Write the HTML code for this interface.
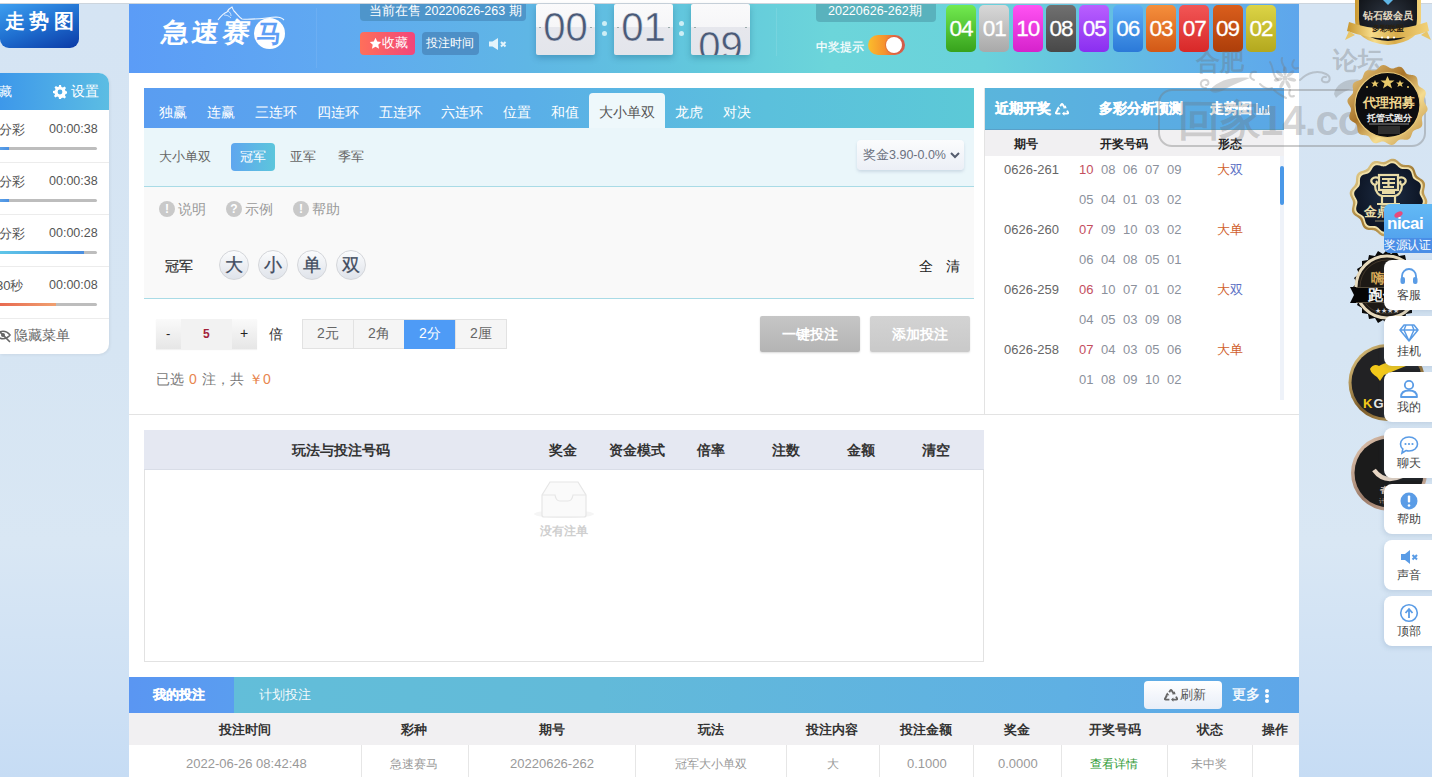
<!DOCTYPE html>
<html><head><meta charset="utf-8">
<style>
*{margin:0;padding:0;box-sizing:border-box}
html,body{width:1432px;height:777px;overflow:hidden}
body{background:linear-gradient(180deg,#d5e4f3 0%,#d6e5f3 45%,#d9e7f4 70%,#cde0f4 90%,#c6dcf4 100%);font-family:"Liberation Sans",sans-serif;position:relative;color:#333}
.a{position:absolute}
.topstrip{left:0;top:0;width:1432px;height:4px;background:linear-gradient(180deg,#fff 0,#fff 3px,#cdd5dd 3px)}
.main{left:129px;top:4px;width:1170px;height:773px;background:#fff}
.hdr{left:129px;top:4px;width:1170px;height:69px;background:linear-gradient(90deg,#5b9cf7 0%,#60a9f1 17%,#5fb6e5 34%,#62c8dc 49%,#6cd5da 60%,#6ad2db 73%,#65c4e0 81%,#62b4e7 90%,#5ea6ec 100%)}
.t{white-space:nowrap;line-height:1}

.dg{top:4px;width:59px;height:51px;border-radius:2px;overflow:hidden;background:linear-gradient(180deg,#fafafb 0,#f6f6f8 45%,#e6e7ed 46%,#e3e5eb 100%);box-shadow:0 3px 6px rgba(0,60,90,0.25)}
.dg:after{content:"";position:absolute;left:3px;right:3px;top:23px;height:1px;background:rgba(0,0,0,0.0);border-left:2px solid #9aa;border-right:2px solid #9aa}
.dgt{position:absolute;left:0;top:3px;width:59px;text-align:center;font-size:40px;line-height:40px;color:#4a5a78;letter-spacing:0px;-webkit-text-stroke:0.6px rgba(236,237,242,0.85)}
.dot{width:5px;height:5px;border-radius:50%;background:#cdeef5}
.ball{top:5px;width:30px;height:47px;border-radius:5px;color:#fff;font-size:22.5px;line-height:48px;text-align:center;letter-spacing:-1px;-webkit-text-stroke:0.3px #fff}

.bq{top:250px;width:30px;height:30px;border-radius:50%;border:1px solid #d4d6da;background:linear-gradient(180deg,#fbfcfd,#dfe3ea);color:#3f4b5e;font-size:17.5px;line-height:28px;text-align:center;-webkit-text-stroke:0.3px #3f4b5e}
</style></head><body>
<div class="a topstrip"></div>
<div class="a main"></div>
<div class="a hdr"></div>

<!-- header content -->
<div class="a" style="left:316px;top:8px;width:1px;height:60px;background:rgba(255,255,255,0.08)"></div>
<div class="a t" style="left:163px;top:19px;font-size:26px;font-weight:bold;color:#fff;letter-spacing:3px;transform:skewX(-6deg) scaleX(1.05);transform-origin:0 0">急速赛</div>
<div class="a" style="left:254px;top:18px;width:31px;height:31px;border-radius:50%;background:#fff"></div>
<div class="a t" style="left:257px;top:21px;font-size:25px;font-weight:bold;color:#5e9ef5;transform:skewX(-6deg)">马</div>
<svg class="a" style="left:214px;top:6px" width="72" height="20" viewBox="0 0 72 20"><path d="M4 14 C7 10,10 7,13 6 C14 4,16 2,18 1 C19 3,19 4,20 5 C23 8,25 11,28 13 C38 14,50 12,62 11 C65 11,68 12,70 14" stroke="#fff" stroke-width="1.1" fill="none" opacity="0.9"/><path d="M10 9 C13 9,15 10,17 12 M14 5 C16 6,17 8,17 10" stroke="#fff" stroke-width="0.9" fill="none" opacity="0.75"/></svg>
<div class="a" style="left:360px;top:4px;width:166px;height:17px;background:#4c92c6;border-radius:0 0 4px 4px;opacity:.9"></div>
<div class="a t" style="left:369px;top:5px;font-size:12.5px;color:#fff">当前在售 20220626-263 期</div>
<div class="a" style="left:360px;top:32px;width:55px;height:23px;border-radius:4px;background:linear-gradient(90deg,#ff6f5a,#f2457b)"></div>
<svg class="a" style="left:369px;top:37px" width="13" height="13" viewBox="0 0 24 24"><path d="M12 1.5l3.2 6.9 7.3.8-5.4 5 1.5 7.3L12 17.8l-6.6 3.7 1.5-7.3-5.4-5 7.3-.8z" fill="#fff"/></svg><div class="a t" style="left:382px;top:37px;font-size:12.5px;color:#fff">收藏</div>
<div class="a" style="left:422px;top:32px;width:57px;height:23px;border-radius:4px;background:#4d8fc6"></div>
<div class="a t" style="left:426px;top:37px;font-size:12px;color:#fff">投注时间</div>
<svg class="a" style="left:489px;top:38px" width="19" height="12" viewBox="0 0 19 12"><path d="M0 3.5 H3.5 L9 0 V12 L3.5 8.5 H0 Z" fill="#e4f4fb"/><path d="M12 4 L16.5 8.5 M16.5 4 L12 8.5" stroke="#e4f4fb" stroke-width="2"/></svg>

<!-- timer -->
<div class="a" style="left:776px;top:8px;width:1px;height:48px;background:rgba(255,255,255,0.1)"></div>
<div class="a dg" style="left:536px"><div class="dgt">00</div></div>
<div class="a dg" style="left:614px"><div class="dgt">01</div></div>
<div class="a dg" style="left:691px"><div class="dgt" style="top:22px">09</div></div>
<div class="a dot" style="left:602px;top:21px"></div><div class="a dot" style="left:602px;top:31px"></div>
<div class="a dot" style="left:679px;top:21px"></div><div class="a dot" style="left:679px;top:31px"></div>


<div class="a" style="left:816px;top:4px;width:120px;height:18px;background:#58aeb9;border-radius:0 0 4px 4px;opacity:.9"></div>
<div class="a t" style="left:828px;top:5px;font-size:12.5px;color:#fff">20220626-262期</div>
<div class="a t" style="left:816px;top:42px;font-size:11.8px;color:#fff;-webkit-text-stroke:0.2px #fff">中奖提示</div>
<div class="a" style="left:868px;top:35px;width:37px;height:20px;border-radius:10px;background:linear-gradient(90deg,#fbbd2c 0%,#f6922e 45%,#e86a3e 70%,#cf5a4e 100%)"></div>
<div class="a" style="left:886px;top:37px;width:16px;height:16px;border-radius:50%;background:#fff;box-shadow:0 0 0 1px rgba(210,90,70,0.5)"></div>
<div class="a ball" style="left:946.0px;background:linear-gradient(180deg,#72ea50,#37a21c)">04</div>
<div class="a ball" style="left:979.3px;background:linear-gradient(180deg,#d8d8d8,#a9a9a9)">01</div>
<div class="a ball" style="left:1012.7px;background:linear-gradient(180deg,#ff52f2,#d622cc)">10</div>
<div class="a ball" style="left:1046.0px;background:linear-gradient(180deg,#707070,#484848)">08</div>
<div class="a ball" style="left:1079.3px;background:linear-gradient(180deg,#b95fff,#8a2ff0)">05</div>
<div class="a ball" style="left:1112.7px;background:linear-gradient(180deg,#5eaef6,#2b79d8)">06</div>
<div class="a ball" style="left:1146.0px;background:linear-gradient(180deg,#f58f3c,#d25816)">03</div>
<div class="a ball" style="left:1179.3px;background:linear-gradient(180deg,#f25656,#d82828)">07</div>
<div class="a ball" style="left:1212.6px;background:linear-gradient(180deg,#da5e1c,#ad3e0a)">09</div>
<div class="a ball" style="left:1246.0px;background:linear-gradient(180deg,#dcd446,#b3a81e)">02</div>

<!-- left sidebar -->
<div class="a" style="left:0;top:4px;width:79px;height:44px;border-radius:0 0 9px 9px;background:linear-gradient(160deg,#3d9ff0 0%,#1f6fd0 50%,#0b3aa6 100%)"></div>
<div class="a t" style="left:5px;top:12px;font-size:19.5px;font-weight:bold;color:#fff;letter-spacing:4.3px">走势图</div>
<div class="a" style="left:0;top:73px;width:109px;height:281px;background:#fff;border-radius:0 10px 10px 0;box-shadow:1px 1px 3px rgba(0,0,0,0.06)"></div>
<div class="a" style="left:0;top:73px;width:109px;height:37px;border-radius:0 10px 0 0;background:linear-gradient(90deg,#3d98ea,#5cbde3)"></div>
<div class="a t" style="left:-1px;top:85px;font-size:13px;color:#fff">藏</div>
<svg class="a" style="left:53px;top:85px" width="14" height="14" viewBox="0 0 14 14"><path fill="#fff" d="M6 0h2l.4 2a5 5 0 0 1 1.5.6l1.7-1.1 1.4 1.4-1.1 1.7c.3.5.5 1 .6 1.5l2 .4v2l-2 .4a5 5 0 0 1-.6 1.5l1.1 1.7-1.4 1.4-1.7-1.1c-.5.3-1 .5-1.5.6L8 14H6l-.4-2a5 5 0 0 1-1.5-.6l-1.7 1.1-1.4-1.4 1.1-1.7A5 5 0 0 1 1.5 8.4L0 8V6l2-.4c.1-.5.3-1 .6-1.5L1.5 2.4l1.4-1.4 1.7 1.1c.5-.3 1-.5 1.5-.6zM7 4.6a2.4 2.4 0 1 0 0 4.8 2.4 2.4 0 0 0 0-4.8z"/></svg>
<div class="a t" style="left:71px;top:85px;font-size:13.5px;color:#fff">设置</div>
<div class="a t" style="left:-1px;top:123px;font-size:13px;color:#555">分彩</div>
<div class="a t" style="left:49px;top:123px;font-size:12.5px;color:#555">00:00:38</div>
<div class="a" style="left:0;top:147px;width:97px;height:3px;background:#bdbdbd;border-radius:0 2px 2px 0"></div>
<div class="a" style="left:0;top:147px;width:9px;height:3px;background:linear-gradient(90deg,#5aa0e8,#4a8fe0)"></div>
<div class="a" style="left:0;top:162px;width:109px;height:1px;background:#ececec"></div>
<div class="a t" style="left:-1px;top:175px;font-size:13px;color:#555">分彩</div>
<div class="a t" style="left:49px;top:175px;font-size:12.5px;color:#555">00:00:38</div>
<div class="a" style="left:0;top:199px;width:97px;height:3px;background:#bdbdbd;border-radius:0 2px 2px 0"></div>
<div class="a" style="left:0;top:199px;width:9px;height:3px;background:linear-gradient(90deg,#5aa0e8,#4a8fe0)"></div>
<div class="a" style="left:0;top:214px;width:109px;height:1px;background:#ececec"></div>
<div class="a t" style="left:-1px;top:227px;font-size:13px;color:#555">分彩</div>
<div class="a t" style="left:49px;top:227px;font-size:12.5px;color:#555">00:00:28</div>
<div class="a" style="left:0;top:251px;width:97px;height:3px;background:#bdbdbd;border-radius:0 2px 2px 0"></div>
<div class="a" style="left:0;top:251px;width:84px;height:3px;background:linear-gradient(90deg,#5ec6e8,#4a8ee0)"></div>
<div class="a" style="left:0;top:266px;width:109px;height:1px;background:#ececec"></div>
<div class="a t" style="left:-4px;top:279px;font-size:13px;color:#555">30秒</div>
<div class="a t" style="left:49px;top:279px;font-size:12.5px;color:#555">00:00:08</div>
<div class="a" style="left:0;top:303px;width:97px;height:3px;background:#bdbdbd;border-radius:0 2px 2px 0"></div>
<div class="a" style="left:0;top:303px;width:56px;height:3px;background:linear-gradient(90deg,#e86a50,#f0a070)"></div>
<div class="a" style="left:0;top:318px;width:109px;height:1px;background:#ececec"></div>

<svg class="a" style="left:0;top:329px" width="12" height="14" viewBox="0 0 12 14"><path d="M-4 6 C0 1,6 1,10 6 C6 11,0 11,-4 6Z" stroke="#666" stroke-width="1.6" fill="none"/><circle cx="3" cy="6" r="2" fill="#666"/><path d="M-2 1 L10 13" stroke="#666" stroke-width="1.6"/></svg>
<div class="a t" style="left:14px;top:329px;font-size:13.5px;color:#666">隐藏菜单</div>

<!-- tabs -->
<div class="a" style="left:144px;top:88px;width:830px;height:40px;background:linear-gradient(90deg,#5a9df1 0%,#5aaee8 45%,#5bc0dc 75%,#5cc9d7 100%)"></div>
<div class="a t" style="left:159px;top:105px;font-size:14px;color:#fff">独赢</div>
<div class="a t" style="left:207px;top:105px;font-size:14px;color:#fff">连赢</div>
<div class="a t" style="left:255px;top:105px;font-size:14px;color:#fff">三连环</div>
<div class="a t" style="left:317px;top:105px;font-size:14px;color:#fff">四连环</div>
<div class="a t" style="left:379px;top:105px;font-size:14px;color:#fff">五连环</div>
<div class="a t" style="left:441px;top:105px;font-size:14px;color:#fff">六连环</div>
<div class="a t" style="left:503px;top:105px;font-size:14px;color:#fff">位置</div>
<div class="a t" style="left:551px;top:105px;font-size:14px;color:#fff">和值</div>
<div class="a t" style="left:675px;top:105px;font-size:14px;color:#fff">龙虎</div>
<div class="a t" style="left:723px;top:105px;font-size:14px;color:#fff">对决</div>

<div class="a" style="left:589px;top:93px;width:76px;height:35px;background:#eef8fb;border-radius:4px 4px 0 0"></div>
<div class="a t" style="left:599px;top:105px;font-size:14px;color:#555">大小单双</div>
<!-- sub bar -->
<div class="a" style="left:144px;top:128px;width:830px;height:58px;background:#eaf6fa"></div>
<div class="a" style="left:144px;top:186px;width:830px;height:1px;background:#a9dbe6"></div>
<div class="a t" style="left:159px;top:150px;font-size:13px;color:#666">大小单双</div>
<div class="a" style="left:231px;top:143px;width:44px;height:28px;border-radius:4px;background:linear-gradient(90deg,#5fa6ef,#5cc6dc)"></div>
<div class="a t" style="left:240px;top:150px;font-size:13px;color:#fff">冠军</div>
<div class="a t" style="left:290px;top:150px;font-size:13px;color:#666">亚军</div>
<div class="a t" style="left:338px;top:150px;font-size:13px;color:#666">季军</div>
<div class="a" style="left:857px;top:140px;width:107px;height:30px;border-radius:4px;background:linear-gradient(180deg,#fbfcfd,#eceff6);box-shadow:0 2px 3px rgba(120,140,170,0.25)"></div>
<div class="a t" style="left:863px;top:149px;font-size:12.5px;color:#6b7180">奖金3.90-0.0%</div>
<svg class="a" style="left:950px;top:152px" width="10" height="7" viewBox="0 0 10 7"><path d="M1 1 L5 5 L9 1" stroke="#555d6e" stroke-width="2" fill="none"/></svg>
<!-- select area -->
<div class="a" style="left:144px;top:187px;width:830px;height:111px;background:#f9f9f9"></div>
<div class="a" style="left:144px;top:298px;width:830px;height:1px;background:#a9dbe6"></div>
<div class="a" style="left:159px;top:201px;width:16px;height:16px;border-radius:50%;background:#c9c9c9;color:#fff;font-size:12px;font-weight:bold;text-align:center;line-height:16px">!</div>
<div class="a t" style="left:178px;top:203px;font-size:13.5px;color:#999">说明</div>
<div class="a" style="left:226px;top:201px;width:16px;height:16px;border-radius:50%;background:#c9c9c9;color:#fff;font-size:12px;font-weight:bold;text-align:center;line-height:16px">?</div>
<div class="a t" style="left:245px;top:203px;font-size:13.5px;color:#999">示例</div>
<div class="a" style="left:293px;top:201px;width:16px;height:16px;border-radius:50%;background:#c9c9c9;color:#fff;font-size:12px;font-weight:bold;text-align:center;line-height:16px">!</div>
<div class="a t" style="left:312px;top:203px;font-size:13.5px;color:#999">帮助</div>
<div class="a t" style="left:165px;top:259px;font-size:14px;color:#333;-webkit-text-stroke:0.25px #333">冠军</div>
<div class="a bq" style="left:219px">大</div>
<div class="a bq" style="left:258px">小</div>
<div class="a bq" style="left:297px">单</div>
<div class="a bq" style="left:336px">双</div>

<div class="a t" style="left:919px;top:259px;font-size:14px;color:#222">全</div>
<div class="a t" style="left:946px;top:259px;font-size:14px;color:#222">清</div>
<!-- bet controls -->
<div class="a" style="left:156px;top:319px;width:101px;height:30px;background:linear-gradient(180deg,#fafafa,#e6e6e6);box-shadow:0 1px 1px rgba(0,0,0,0.05)"></div>
<div class="a" style="left:181px;top:319px;width:51px;height:30px;background:#f2f2f2"></div>
<div class="a t" style="left:166px;top:327px;font-size:13px;color:#222">-</div>
<div class="a t" style="left:203px;top:328px;font-size:12px;font-weight:bold;color:#a3213a">5</div>
<div class="a t" style="left:240px;top:326px;font-size:14px;color:#222">+</div>
<div class="a t" style="left:269px;top:327px;font-size:14px;color:#333">倍</div>
<div class="a" style="left:302px;top:319px;width:205px;height:30px;border:1px solid #e2e2e2;background:#f5f5f5"></div>
<div class="a" style="left:353px;top:320px;width:1px;height:28px;background:#e2e2e2"></div>
<div class="a" style="left:455px;top:320px;width:1px;height:28px;background:#e2e2e2"></div>
<div class="a" style="left:404px;top:320px;width:51px;height:29px;background:#4e9bf6"></div>
<div class="a t" style="left:317px;top:326px;font-size:14px;color:#666">2元</div>
<div class="a t" style="left:368px;top:326px;font-size:14px;color:#666">2角</div>
<div class="a t" style="left:419px;top:326px;font-size:14px;color:#fff">2分</div>
<div class="a t" style="left:470px;top:326px;font-size:14px;color:#666">2厘</div>
<div class="a t" style="left:156px;top:372px;font-size:14px;color:#777;word-spacing:1.2px">已选 <span style="color:#e8864e">0</span> 注，共 <span style="color:#e8864e">￥0</span></div>
<div class="a" style="left:760px;top:316px;width:100px;height:36px;border-radius:2px;background:linear-gradient(180deg,#c6c6c6,#b4b4b4);box-shadow:0 1px 2px rgba(0,0,0,0.15)"></div>
<div class="a t" style="left:782px;top:327px;font-size:14px;font-weight:bold;color:#fff">一键投注</div>
<div class="a" style="left:870px;top:316px;width:100px;height:36px;border-radius:2px;background:linear-gradient(180deg,#d3d3d3,#c9c9c9);box-shadow:0 1px 2px rgba(0,0,0,0.12)"></div>
<div class="a t" style="left:892px;top:327px;font-size:14px;font-weight:bold;color:#fff">添加投注</div>
<div class="a" style="left:129px;top:414px;width:1170px;height:1px;background:#e3e3e3"></div>
<div class="a" style="left:984px;top:88px;width:1px;height:326px;background:#e3e3e3"></div>

<!-- right panel -->
<div class="a" style="left:985px;top:88px;width:299px;height:42px;background:linear-gradient(90deg,#5ab5dc,#5aa7e6);border-bottom:1px solid #5aa0c8"></div>
<div class="a t" style="left:995px;top:102px;font-size:13.5px;font-weight:bold;color:#fff;-webkit-text-stroke:0.4px #fff">近期开奖</div>
<svg class="a" style="left:1055px;top:102px" width="14" height="14" viewBox="0 0 14 14"><g fill="none" stroke="#fff" stroke-width="1.9" stroke-linejoin="round"><path d="M5.2 4.2 L6.3 2.4 Q7 1.3 7.7 2.4 L9.6 5.6"/><path d="M12 8.6 L13 10.4 Q13.6 11.6 12.3 11.6 H8.6"/><path d="M5.4 11.6 H1.8 Q0.5 11.6 1.1 10.4 L3 7.2"/></g><g fill="#fff"><path d="M8.2 6.6 L11.6 6.2 L10.6 3.2Z"/><path d="M9.4 9.4 L7 11.6 L9.4 13.8Z"/><path d="M1.4 7.4 L3.2 4.4 L5.4 7.2Z"/></g></svg>
<div class="a t" style="left:1099px;top:102px;font-size:13.5px;font-weight:bold;color:#fff;-webkit-text-stroke:0.4px #fff">多彩分析预测</div>
<div class="a t" style="left:1210px;top:102px;font-size:13.5px;font-weight:bold;color:#fff;-webkit-text-stroke:0.4px #fff">走势图</div>
<svg class="a" style="left:1256px;top:103px" width="14" height="12" viewBox="0 0 14 12"><path d="M1 0 V11 H14" stroke="#fff" stroke-width="1.4" fill="none"/><path d="M4 5 V10 M7 3 V10 M10 6 V10 M12.5 2 V10" stroke="#fff" stroke-width="1.4"/></svg>
<div class="a" style="left:985px;top:130px;width:299px;height:26px;background:#f1f0f2"></div>
<div class="a t" style="left:1014px;top:138px;font-size:12px;font-weight:bold;color:#222">期号</div>
<div class="a t" style="left:1100px;top:138px;font-size:12px;font-weight:bold;color:#222">开奖号码</div>
<div class="a t" style="left:1218px;top:138px;font-size:12px;font-weight:bold;color:#222">形态</div>
<div class="a" style="left:1280px;top:156px;width:4px;height:244px;background:#eef2f9"></div>
<div class="a" style="left:1280px;top:166px;width:4px;height:39px;border-radius:2px;background:#4a98e8"></div>
<div class="a t" style="left:1004px;top:163.0px;font-size:13px;color:#666">0626-261</div>
<div class="a t" style="left:1079px;top:163.0px;font-size:13px;color:#c44e5e">10</div>
<div class="a t" style="left:1101px;top:163.0px;font-size:13px;color:#8b919c">08</div>
<div class="a t" style="left:1123px;top:163.0px;font-size:13px;color:#8b919c">06</div>
<div class="a t" style="left:1145px;top:163.0px;font-size:13px;color:#8b919c">07</div>
<div class="a t" style="left:1167px;top:163.0px;font-size:13px;color:#8b919c">09</div>
<div class="a t" style="left:1079px;top:193.0px;font-size:13px;color:#8b919c">05</div>
<div class="a t" style="left:1101px;top:193.0px;font-size:13px;color:#8b919c">04</div>
<div class="a t" style="left:1123px;top:193.0px;font-size:13px;color:#8b919c">01</div>
<div class="a t" style="left:1145px;top:193.0px;font-size:13px;color:#8b919c">03</div>
<div class="a t" style="left:1167px;top:193.0px;font-size:13px;color:#8b919c">02</div>
<div class="a t" style="left:1217px;top:162.5px;font-size:13px;color:#d0602c">大<span style="color:#5b6fc4">双</span></div>
<div class="a t" style="left:1004px;top:223.0px;font-size:13px;color:#666">0626-260</div>
<div class="a t" style="left:1079px;top:223.0px;font-size:13px;color:#c44e5e">07</div>
<div class="a t" style="left:1101px;top:223.0px;font-size:13px;color:#8b919c">09</div>
<div class="a t" style="left:1123px;top:223.0px;font-size:13px;color:#8b919c">10</div>
<div class="a t" style="left:1145px;top:223.0px;font-size:13px;color:#8b919c">03</div>
<div class="a t" style="left:1167px;top:223.0px;font-size:13px;color:#8b919c">02</div>
<div class="a t" style="left:1079px;top:253.0px;font-size:13px;color:#8b919c">06</div>
<div class="a t" style="left:1101px;top:253.0px;font-size:13px;color:#8b919c">04</div>
<div class="a t" style="left:1123px;top:253.0px;font-size:13px;color:#8b919c">08</div>
<div class="a t" style="left:1145px;top:253.0px;font-size:13px;color:#8b919c">05</div>
<div class="a t" style="left:1167px;top:253.0px;font-size:13px;color:#8b919c">01</div>
<div class="a t" style="left:1217px;top:222.5px;font-size:13px;color:#d0602c">大<span style="color:#d0602c">单</span></div>
<div class="a t" style="left:1004px;top:283.0px;font-size:13px;color:#666">0626-259</div>
<div class="a t" style="left:1079px;top:283.0px;font-size:13px;color:#c44e5e">06</div>
<div class="a t" style="left:1101px;top:283.0px;font-size:13px;color:#8b919c">10</div>
<div class="a t" style="left:1123px;top:283.0px;font-size:13px;color:#8b919c">07</div>
<div class="a t" style="left:1145px;top:283.0px;font-size:13px;color:#8b919c">01</div>
<div class="a t" style="left:1167px;top:283.0px;font-size:13px;color:#8b919c">02</div>
<div class="a t" style="left:1079px;top:313.0px;font-size:13px;color:#8b919c">04</div>
<div class="a t" style="left:1101px;top:313.0px;font-size:13px;color:#8b919c">05</div>
<div class="a t" style="left:1123px;top:313.0px;font-size:13px;color:#8b919c">03</div>
<div class="a t" style="left:1145px;top:313.0px;font-size:13px;color:#8b919c">09</div>
<div class="a t" style="left:1167px;top:313.0px;font-size:13px;color:#8b919c">08</div>
<div class="a t" style="left:1217px;top:282.5px;font-size:13px;color:#d0602c">大<span style="color:#5b6fc4">双</span></div>
<div class="a t" style="left:1004px;top:343.0px;font-size:13px;color:#666">0626-258</div>
<div class="a t" style="left:1079px;top:343.0px;font-size:13px;color:#c44e5e">07</div>
<div class="a t" style="left:1101px;top:343.0px;font-size:13px;color:#8b919c">04</div>
<div class="a t" style="left:1123px;top:343.0px;font-size:13px;color:#8b919c">03</div>
<div class="a t" style="left:1145px;top:343.0px;font-size:13px;color:#8b919c">05</div>
<div class="a t" style="left:1167px;top:343.0px;font-size:13px;color:#8b919c">06</div>
<div class="a t" style="left:1079px;top:373.0px;font-size:13px;color:#8b919c">01</div>
<div class="a t" style="left:1101px;top:373.0px;font-size:13px;color:#8b919c">08</div>
<div class="a t" style="left:1123px;top:373.0px;font-size:13px;color:#8b919c">09</div>
<div class="a t" style="left:1145px;top:373.0px;font-size:13px;color:#8b919c">10</div>
<div class="a t" style="left:1167px;top:373.0px;font-size:13px;color:#8b919c">02</div>
<div class="a t" style="left:1217px;top:342.5px;font-size:13px;color:#d0602c">大<span style="color:#d0602c">单</span></div>

<!-- bet list table -->
<div class="a" style="left:144px;top:430px;width:840px;height:232px;border:1px solid #e2e2e2;background:#fff"></div>
<div class="a" style="left:144px;top:430px;width:840px;height:40px;background:#e5e8f2;border-bottom:1px solid #d9dde7"></div>
<div class="a t" style="left:292px;top:443px;font-size:14px;font-weight:bold;color:#333">玩法与投注号码</div>
<div class="a t" style="left:549px;top:443px;font-size:14px;font-weight:bold;color:#333">奖金</div>
<div class="a t" style="left:609px;top:443px;font-size:14px;font-weight:bold;color:#333">资金模式</div>
<div class="a t" style="left:697px;top:443px;font-size:14px;font-weight:bold;color:#333">倍率</div>
<div class="a t" style="left:772px;top:443px;font-size:14px;font-weight:bold;color:#333">注数</div>
<div class="a t" style="left:847px;top:443px;font-size:14px;font-weight:bold;color:#333">金额</div>
<div class="a t" style="left:922px;top:443px;font-size:14px;font-weight:bold;color:#333">清空</div>

<svg class="a" style="left:533px;top:478px" width="62" height="42" viewBox="0 0 62 42"><ellipse cx="31" cy="36" rx="30" ry="4" fill="#f5f5f5"/><path d="M9 17 L17 4 H45 L53 17 V37 Q53 39 51 39 H11 Q9 39 9 37Z" fill="#fafafa" stroke="#e6e6e6" stroke-width="1.2"/><path d="M9 17 H22 Q23 23 27 23 H35 Q39 23 40 17 H53" fill="none" stroke="#e6e6e6" stroke-width="1.2"/></svg>
<div class="a t" style="left:540px;top:525px;font-size:12px;font-weight:bold;color:#cfcfcf">没有注单</div>
<!-- bottom tabs -->
<div class="a" style="left:129px;top:677px;width:1170px;height:36px;background:linear-gradient(90deg,#62bfd9 0%,#62bad9 40%,#5fb0e3 80%,#5ea6e9 100%)"></div>
<div class="a" style="left:129px;top:677px;width:105px;height:36px;background:linear-gradient(90deg,#5a96f2,#5a9df0)"></div>
<div class="a t" style="left:153px;top:688px;font-size:13px;font-weight:bold;color:#fff;-webkit-text-stroke:0.3px #fff">我的投注</div>
<div class="a t" style="left:259px;top:688px;font-size:13px;color:#fff;opacity:.95">计划投注</div>
<div class="a" style="left:1144px;top:681px;width:78px;height:28px;border-radius:4px;background:linear-gradient(180deg,#fff,#e8eef8)"></div>
<svg class="a" style="left:1164px;top:688px" width="14" height="14" viewBox="0 0 14 14"><g fill="none" stroke="#666" stroke-width="1.9" stroke-linejoin="round"><path d="M5.2 4.2 L6.3 2.4 Q7 1.3 7.7 2.4 L9.6 5.6"/><path d="M12 8.6 L13 10.4 Q13.6 11.6 12.3 11.6 H8.6"/><path d="M5.4 11.6 H1.8 Q0.5 11.6 1.1 10.4 L3 7.2"/></g><g fill="#666"><path d="M8.2 6.6 L11.6 6.2 L10.6 3.2Z"/><path d="M9.4 9.4 L7 11.6 L9.4 13.8Z"/><path d="M1.4 7.4 L3.2 4.4 L5.4 7.2Z"/></g></svg>
<div class="a t" style="left:1180px;top:688px;font-size:13px;color:#555">刷新</div>
<div class="a t" style="left:1232px;top:688px;font-size:13.5px;color:#fff;-webkit-text-stroke:0.3px #fff">更多</div>
<div class="a" style="left:1265px;top:689px;width:4px;height:4px;border-radius:50%;background:#fff;box-shadow:0 5px 0 #fff,0 10px 0 #fff"></div>
<div class="a" style="left:129px;top:713px;width:1170px;height:32px;background:#f1f0f2"></div>
<div class="a t" style="left:219px;top:723px;font-size:13px;font-weight:bold;color:#333">投注时间</div>
<div class="a t" style="left:401px;top:723px;font-size:13px;font-weight:bold;color:#333">彩种</div>
<div class="a t" style="left:539px;top:723px;font-size:13px;font-weight:bold;color:#333">期号</div>
<div class="a t" style="left:698px;top:723px;font-size:13px;font-weight:bold;color:#333">玩法</div>
<div class="a t" style="left:806px;top:723px;font-size:13px;font-weight:bold;color:#333">投注内容</div>
<div class="a t" style="left:900px;top:723px;font-size:13px;font-weight:bold;color:#333">投注金额</div>
<div class="a t" style="left:1004px;top:723px;font-size:13px;font-weight:bold;color:#333">奖金</div>
<div class="a t" style="left:1089px;top:723px;font-size:13px;font-weight:bold;color:#333">开奖号码</div>
<div class="a t" style="left:1197px;top:723px;font-size:13px;font-weight:bold;color:#333">状态</div>
<div class="a t" style="left:1262px;top:723px;font-size:13px;font-weight:bold;color:#333">操作</div>
<div class="a" style="left:361px;top:745px;width:1px;height:32px;background:#e6e6e6"></div>
<div class="a" style="left:468px;top:745px;width:1px;height:32px;background:#e6e6e6"></div>
<div class="a" style="left:635px;top:745px;width:1px;height:32px;background:#e6e6e6"></div>
<div class="a" style="left:786px;top:745px;width:1px;height:32px;background:#e6e6e6"></div>
<div class="a" style="left:879px;top:745px;width:1px;height:32px;background:#e6e6e6"></div>
<div class="a" style="left:973px;top:745px;width:1px;height:32px;background:#e6e6e6"></div>
<div class="a" style="left:1061px;top:745px;width:1px;height:32px;background:#e6e6e6"></div>
<div class="a" style="left:1167px;top:745px;width:1px;height:32px;background:#e6e6e6"></div>
<div class="a" style="left:1252px;top:745px;width:1px;height:32px;background:#e6e6e6"></div>
<div class="a t" style="left:186px;top:757px;font-size:13px;color:#999">2022-06-26 08:42:48</div>
<div class="a t" style="left:390px;top:758px;font-size:12.2px;color:#999">急速赛马</div>
<div class="a t" style="left:510px;top:757px;font-size:13px;color:#999">20220626-262</div>
<div class="a t" style="left:675px;top:758px;font-size:12.2px;color:#999">冠军大小单双</div>
<div class="a t" style="left:827px;top:758px;font-size:12.2px;color:#999">大</div>
<div class="a t" style="left:907px;top:757px;font-size:13px;color:#999">0.1000</div>
<div class="a t" style="left:998px;top:757px;font-size:13px;color:#999">0.0000</div>
<div class="a t" style="left:1090px;top:758px;font-size:12.2px;color:#2f9a36">查看详情</div>
<div class="a t" style="left:1191px;top:758px;font-size:12.2px;color:#999">未中奖</div>

<!-- watermark -->
<div class="a" style="left:1158px;top:89px;width:268px;height:58px;border:2px solid rgba(120,120,120,0.38);border-radius:14px"></div>
<div class="a t" style="left:1178px;top:100px;font-size:42px;font-weight:bold;color:rgba(110,110,110,0.3);letter-spacing:-1px">回家14.co</div>
<div class="a t" style="left:1196px;top:50px;font-size:24px;font-weight:bold;color:rgba(110,110,110,0.32)">合肥</div>
<div class="a t" style="left:1333px;top:48px;font-size:25px;font-weight:bold;color:rgba(110,110,110,0.32)">论坛</div>
<svg class="a" style="left:1190px;top:50px" width="170" height="60" viewBox="0 0 170 60">
<g fill="none" stroke="rgba(120,120,120,0.33)" stroke-width="2" stroke-linecap="round">
<path d="M16 38 C10 38,9 31,14 30 C19 29,20 35,16 35"/>
<path d="M66 22 C60 20,58 28,64 30"/>
<path d="M80 12 C84 18,82 26,88 30 M92 8 C90 14,96 16,94 20 M104 10 C100 16,104 20,108 18"/>
<path d="M84 40 C88 44,92 46,96 48 M100 40 C98 44,100 48,104 46"/>
<path d="M110 30 C118 22,128 20,136 24 C142 27,140 34,134 32 C130 31,132 26,136 27"/>
<path d="M70 34 C74 38,78 40,82 38"/>
</g>
<g fill="rgba(120,120,120,0.3)">
<path d="M20 40 C28 30,44 26,60 28 C50 32,40 36,34 40 C28 43,22 44,20 40Z"/>
<path d="M144 44 C146 34,156 28,170 30 L170 38 C160 38,152 42,146 48Z"/>
<ellipse cx="95.0" cy="21.0" rx="4.5" ry="1.8" transform="rotate(-90 95.0 21.0)"/><ellipse cx="100.5" cy="23.6" rx="4.5" ry="1.8" transform="rotate(-39 100.5 23.6)"/><ellipse cx="101.8" cy="29.6" rx="4.5" ry="1.8" transform="rotate(13 101.8 29.6)"/><ellipse cx="98.0" cy="34.3" rx="4.5" ry="1.8" transform="rotate(64 98.0 34.3)"/><ellipse cx="92.0" cy="34.3" rx="4.5" ry="1.8" transform="rotate(116 92.0 34.3)"/><ellipse cx="88.2" cy="29.6" rx="4.5" ry="1.8" transform="rotate(167 88.2 29.6)"/><ellipse cx="89.5" cy="23.6" rx="4.5" ry="1.8" transform="rotate(219 89.5 23.6)"/>
<circle cx="95" cy="28" r="2.5"/>
</g></svg>

<!-- right badges -->
<svg class="a" style="left:1345px;top:0px" width="86" height="48" viewBox="0 0 86 48">
<defs><linearGradient id="gld" x1="0" y1="0" x2="1" y2="0"><stop offset="0" stop-color="#c8962e"/><stop offset="0.3" stop-color="#f6dc8a"/><stop offset="0.6" stop-color="#d9ac4a"/><stop offset="1" stop-color="#f2d27a"/></linearGradient>
<radialGradient id="dk" cx="0.5" cy="0.4" r="0.6"><stop offset="0" stop-color="#2c3440"/><stop offset="1" stop-color="#111419"/></radialGradient></defs>
<path d="M10 -4 H76 V20 Q76 42 43 45 Q10 42 10 20Z" fill="url(#gld)"/>
<path d="M14 -4 H72 V19 Q72 39 43 41 Q14 39 14 19Z" fill="url(#dk)"/>
<path d="M36 -2 L43 5 L50 -2Z" fill="#5fb6e6"/>
<text x="43" y="18.5" font-size="9.5" font-weight="bold" fill="#e6dcc4" text-anchor="middle" font-family="Liberation Sans, sans-serif">钻石级会员</text>
<path d="M4 22 Q43 36 82 22 L84 31 Q43 46 2 31Z" fill="url(#gld)"/>
<path d="M4 31 L0 40 L10 35Z M82 31 L86 40 L76 35Z" fill="#e8c66a"/>
<text x="43" y="30.5" font-size="7.5" font-weight="bold" fill="#2a2010" text-anchor="middle" font-family="Liberation Sans, sans-serif">多彩联盟</text>
<circle cx="37" cy="37.5" r="1.1" fill="#fff"/><circle cx="43" cy="37.5" r="1.3" fill="#fff"/><circle cx="49" cy="37.5" r="1.1" fill="#fff"/>
</svg>

<svg class="a" style="left:1347px;top:63px" width="82" height="84" viewBox="0 0 82 84">
<defs><linearGradient id="gl2" x1="0" y1="0" x2="1" y2="1"><stop offset="0" stop-color="#f3d488"/><stop offset="0.4" stop-color="#a8742a"/><stop offset="0.65" stop-color="#f5dc90"/><stop offset="1" stop-color="#b58236"/></linearGradient></defs>
<path d="M79.00 42.00 L79.55 42.88 L80.02 43.77 L80.37 44.69 L80.55 45.60 L80.55 46.51 L80.35 47.40 L79.96 48.25 L79.42 49.06 L78.76 49.83 L78.03 50.57 L77.29 51.27 L76.59 51.96 L75.98 52.65 L75.49 53.37 L75.14 54.12 L74.94 54.93 L74.88 55.79 L74.93 56.72 L75.05 57.69 L75.19 58.70 L75.30 59.73 L75.33 60.75 L75.25 61.72 L75.02 62.62 L74.62 63.44 L74.06 64.15 L73.34 64.75 L72.50 65.25 L71.57 65.66 L70.60 66.00 L69.63 66.32 L68.70 66.63 L67.84 66.99 L67.09 67.42 L66.45 67.95 L65.92 68.59 L65.49 69.34 L65.13 70.20 L64.82 71.13 L64.50 72.10 L64.16 73.07 L63.75 74.00 L63.25 74.84 L62.65 75.56 L61.94 76.12 L61.12 76.52 L60.22 76.75 L59.25 76.83 L58.23 76.80 L57.20 76.69 L56.19 76.55 L55.22 76.43 L54.29 76.38 L53.43 76.44 L52.62 76.64 L51.87 76.99 L51.15 77.48 L50.46 78.09 L49.77 78.79 L49.07 79.53 L48.33 80.26 L47.56 80.92 L46.75 81.46 L45.90 81.85 L45.01 82.05 L44.10 82.05 L43.19 81.87 L42.27 81.52 L41.38 81.05 L40.50 80.50 L39.65 79.93 L38.82 79.40 L38.01 78.96 L37.20 78.64 L36.39 78.47 L35.56 78.46 L34.71 78.59 L33.81 78.84 L32.89 79.17 L31.93 79.53 L30.96 79.87 L29.98 80.13 L29.01 80.27 L28.07 80.24 L27.19 80.04 L26.37 79.65 L25.62 79.08 L24.95 78.37 L24.35 77.56 L23.80 76.69 L23.27 75.81 L22.76 74.97 L22.22 74.22 L21.63 73.58 L20.97 73.07 L20.23 72.70 L19.40 72.45 L18.49 72.29 L17.51 72.19 L16.50 72.10 L15.47 71.98 L14.47 71.79 L13.54 71.49 L12.71 71.06 L12.00 70.50 L11.44 69.79 L11.01 68.96 L10.71 68.03 L10.52 67.03 L10.40 66.00 L10.31 64.99 L10.21 64.01 L10.05 63.10 L9.80 62.27 L9.43 61.53 L8.92 60.87 L8.28 60.28 L7.53 59.74 L6.69 59.23 L5.81 58.70 L4.94 58.15 L4.13 57.55 L3.42 56.88 L2.85 56.13 L2.46 55.31 L2.26 54.43 L2.23 53.49 L2.37 52.52 L2.63 51.54 L2.97 50.57 L3.33 49.61 L3.66 48.69 L3.91 47.79 L4.04 46.94 L4.03 46.11 L3.86 45.30 L3.54 44.49 L3.10 43.68 L2.57 42.85 L2.00 42.00 L1.45 41.12 L0.98 40.23 L0.63 39.31 L0.45 38.40 L0.45 37.49 L0.65 36.60 L1.04 35.75 L1.58 34.94 L2.24 34.17 L2.97 33.43 L3.71 32.73 L4.41 32.04 L5.02 31.35 L5.51 30.63 L5.86 29.88 L6.06 29.07 L6.12 28.21 L6.07 27.28 L5.95 26.31 L5.81 25.30 L5.70 24.27 L5.67 23.25 L5.75 22.28 L5.98 21.38 L6.38 20.56 L6.94 19.85 L7.66 19.25 L8.50 18.75 L9.43 18.34 L10.40 18.00 L11.37 17.68 L12.30 17.37 L13.16 17.01 L13.91 16.58 L14.55 16.05 L15.08 15.41 L15.51 14.66 L15.87 13.80 L16.18 12.87 L16.50 11.90 L16.84 10.93 L17.25 10.00 L17.75 9.16 L18.35 8.44 L19.06 7.88 L19.88 7.48 L20.78 7.25 L21.75 7.17 L22.77 7.20 L23.80 7.31 L24.81 7.45 L25.78 7.57 L26.71 7.62 L27.57 7.56 L28.38 7.36 L29.13 7.01 L29.85 6.52 L30.54 5.91 L31.23 5.21 L31.93 4.47 L32.67 3.74 L33.44 3.08 L34.25 2.54 L35.10 2.15 L35.99 1.95 L36.90 1.95 L37.81 2.13 L38.73 2.48 L39.62 2.95 L40.50 3.50 L41.35 4.07 L42.18 4.60 L42.99 5.04 L43.80 5.36 L44.61 5.53 L45.44 5.54 L46.29 5.41 L47.19 5.16 L48.11 4.83 L49.07 4.47 L50.04 4.13 L51.02 3.87 L51.99 3.73 L52.93 3.76 L53.81 3.96 L54.63 4.35 L55.38 4.92 L56.05 5.63 L56.65 6.44 L57.20 7.31 L57.73 8.19 L58.24 9.03 L58.78 9.78 L59.37 10.42 L60.03 10.93 L60.77 11.30 L61.60 11.55 L62.51 11.71 L63.49 11.81 L64.50 11.90 L65.53 12.02 L66.53 12.21 L67.46 12.51 L68.29 12.94 L69.00 13.50 L69.56 14.21 L69.99 15.04 L70.29 15.97 L70.48 16.97 L70.60 18.00 L70.69 19.01 L70.79 19.99 L70.95 20.90 L71.20 21.73 L71.57 22.47 L72.08 23.13 L72.72 23.72 L73.47 24.26 L74.31 24.77 L75.19 25.30 L76.06 25.85 L76.87 26.45 L77.58 27.12 L78.15 27.87 L78.54 28.69 L78.74 29.57 L78.77 30.51 L78.63 31.48 L78.37 32.46 L78.03 33.43 L77.67 34.39 L77.34 35.31 L77.09 36.21 L76.96 37.06 L76.97 37.89 L77.14 38.70 L77.46 39.51 L77.90 40.32 L78.43 41.15Z" fill="url(#gl2)"/>
<circle cx="40.5" cy="42" r="32.5" fill="#0d0d0f" stroke="#e8c878" stroke-width="1.2"/>
<path d="M40.5 13 l2 4.6 h5 l-4 3 1.5 4.8 -4.5 -2.9 -4.5 2.9 1.5 -4.8 -4 -3 h5z" fill="#e9c96a"/>
<path d="M28 17 l1.1 2.6 h2.8 l-2.2 1.7 .9 2.7 -2.6 -1.6 -2.6 1.6 .9 -2.7 -2.2 -1.7 h2.8z" fill="#e9c96a"/>
<path d="M53 17 l1.1 2.6 h2.8 l-2.2 1.7 .9 2.7 -2.6 -1.6 -2.6 1.6 .9 -2.7 -2.2 -1.7 h2.8z" fill="#e9c96a"/>
<circle cx="20" cy="24" r="1" fill="#e9c96a"/><circle cx="61" cy="24" r="1" fill="#e9c96a"/>
<text x="42" y="44" font-size="13" font-weight="bold" fill="#f0d68e" text-anchor="middle" font-family="Liberation Sans, sans-serif">代理招募</text>
<text x="42" y="58" font-size="8.5" font-weight="bold" fill="#f2f2f2" text-anchor="middle" font-family="Liberation Sans, sans-serif">托管式跑分</text>
<path d="M22 61 H62" stroke="#aaa" stroke-width="0.8"/>
<rect x="31" y="63" width="22" height="8" fill="#2e2e2e"/>
</svg>

<svg class="a" style="left:1349px;top:158px" width="80" height="80" viewBox="0 0 80 80">
<defs><linearGradient id="gl3" x1="0" y1="0" x2="1" y2="1"><stop offset="0" stop-color="#f6e4a4"/><stop offset="0.5" stop-color="#a07a34"/><stop offset="1" stop-color="#ecd088"/></linearGradient>
<radialGradient id="nv" cx="0.5" cy="0.45" r="0.55"><stop offset="0" stop-color="#1e2d44"/><stop offset="1" stop-color="#0b1322"/></radialGradient></defs>
<path d="M77.00 39.50 L77.48 40.49 L77.89 41.51 L78.17 42.54 L78.31 43.58 L78.27 44.60 L78.04 45.60 L77.64 46.57 L77.10 47.49 L76.44 48.37 L75.72 49.21 L74.98 50.01 L74.27 50.80 L73.63 51.59 L73.09 52.39 L72.67 53.24 L72.37 54.13 L72.18 55.09 L72.07 56.10 L72.02 57.16 L71.98 58.25 L71.90 59.35 L71.74 60.44 L71.47 61.47 L71.07 62.44 L70.52 63.30 L69.83 64.06 L69.00 64.69 L68.07 65.22 L67.06 65.65 L66.02 66.02 L64.97 66.34 L63.96 66.67 L63.01 67.03 L62.14 67.46 L61.35 67.98 L60.65 68.61 L60.01 69.34 L59.41 70.16 L58.84 71.05 L58.25 71.98 L57.63 72.89 L56.95 73.75 L56.20 74.52 L55.37 75.15 L54.46 75.62 L53.48 75.93 L52.45 76.07 L51.38 76.06 L50.29 75.93 L49.21 75.72 L48.14 75.48 L47.10 75.26 L46.10 75.10 L45.13 75.04 L44.19 75.09 L43.26 75.28 L42.34 75.59 L41.41 76.01 L40.47 76.49 L39.50 77.00 L38.51 77.48 L37.49 77.89 L36.46 78.17 L35.42 78.31 L34.40 78.27 L33.40 78.04 L32.43 77.64 L31.51 77.10 L30.63 76.44 L29.79 75.72 L28.99 74.98 L28.20 74.27 L27.41 73.63 L26.61 73.09 L25.76 72.67 L24.87 72.37 L23.91 72.18 L22.90 72.07 L21.84 72.02 L20.75 71.98 L19.65 71.90 L18.56 71.74 L17.53 71.47 L16.56 71.07 L15.70 70.52 L14.94 69.83 L14.31 69.00 L13.78 68.07 L13.35 67.06 L12.98 66.02 L12.66 64.97 L12.33 63.96 L11.97 63.01 L11.54 62.14 L11.02 61.35 L10.39 60.65 L9.66 60.01 L8.84 59.41 L7.95 58.84 L7.02 58.25 L6.11 57.63 L5.25 56.95 L4.48 56.20 L3.85 55.37 L3.38 54.46 L3.07 53.48 L2.93 52.45 L2.94 51.38 L3.07 50.29 L3.28 49.21 L3.52 48.14 L3.74 47.10 L3.90 46.10 L3.96 45.13 L3.91 44.19 L3.72 43.26 L3.41 42.34 L2.99 41.41 L2.51 40.47 L2.00 39.50 L1.52 38.51 L1.11 37.49 L0.83 36.46 L0.69 35.42 L0.73 34.40 L0.96 33.40 L1.36 32.43 L1.90 31.51 L2.56 30.63 L3.28 29.79 L4.02 28.99 L4.73 28.20 L5.37 27.41 L5.91 26.61 L6.33 25.76 L6.63 24.87 L6.82 23.91 L6.93 22.90 L6.98 21.84 L7.02 20.75 L7.10 19.65 L7.26 18.56 L7.53 17.53 L7.93 16.56 L8.48 15.70 L9.17 14.94 L10.00 14.31 L10.93 13.78 L11.94 13.35 L12.98 12.98 L14.03 12.66 L15.04 12.33 L15.99 11.97 L16.86 11.54 L17.65 11.02 L18.35 10.39 L18.99 9.66 L19.59 8.84 L20.16 7.95 L20.75 7.02 L21.37 6.11 L22.05 5.25 L22.80 4.48 L23.63 3.85 L24.54 3.38 L25.52 3.07 L26.55 2.93 L27.62 2.94 L28.71 3.07 L29.79 3.28 L30.86 3.52 L31.90 3.74 L32.90 3.90 L33.87 3.96 L34.81 3.91 L35.74 3.72 L36.66 3.41 L37.59 2.99 L38.53 2.51 L39.50 2.00 L40.49 1.52 L41.51 1.11 L42.54 0.83 L43.58 0.69 L44.60 0.73 L45.60 0.96 L46.57 1.36 L47.49 1.90 L48.37 2.56 L49.21 3.28 L50.01 4.02 L50.80 4.73 L51.59 5.37 L52.39 5.91 L53.24 6.33 L54.13 6.63 L55.09 6.82 L56.10 6.93 L57.16 6.98 L58.25 7.02 L59.35 7.10 L60.44 7.26 L61.47 7.53 L62.44 7.93 L63.30 8.48 L64.06 9.17 L64.69 10.00 L65.22 10.93 L65.65 11.94 L66.02 12.98 L66.34 14.03 L66.67 15.04 L67.03 15.99 L67.46 16.86 L67.98 17.65 L68.61 18.35 L69.34 18.99 L70.16 19.59 L71.05 20.16 L71.98 20.75 L72.89 21.37 L73.75 22.05 L74.52 22.80 L75.15 23.63 L75.62 24.54 L75.93 25.52 L76.07 26.55 L76.06 27.62 L75.93 28.71 L75.72 29.79 L75.48 30.86 L75.26 31.90 L75.10 32.90 L75.04 33.87 L75.09 34.81 L75.28 35.74 L75.59 36.66 L76.01 37.59 L76.49 38.53Z" fill="url(#gl3)"/>
<path d="M74.50 39.50 L74.98 40.43 L75.39 41.38 L75.68 42.35 L75.82 43.32 L75.79 44.28 L75.57 45.21 L75.19 46.11 L74.66 46.97 L74.01 47.79 L73.31 48.56 L72.58 49.30 L71.89 50.02 L71.27 50.75 L70.75 51.50 L70.36 52.28 L70.08 53.12 L69.92 54.01 L69.85 54.96 L69.82 55.96 L69.81 57.00 L69.76 58.05 L69.64 59.07 L69.41 60.06 L69.05 60.97 L68.54 61.78 L67.88 62.48 L67.10 63.07 L66.21 63.55 L65.25 63.93 L64.25 64.25 L63.25 64.53 L62.29 64.81 L61.39 65.13 L60.57 65.52 L59.83 66.00 L59.18 66.58 L58.59 67.28 L58.05 68.06 L57.53 68.92 L57.00 69.81 L56.44 70.69 L55.82 71.52 L55.13 72.26 L54.35 72.86 L53.51 73.31 L52.59 73.60 L51.62 73.71 L50.61 73.68 L49.58 73.53 L48.56 73.31 L47.56 73.05 L46.58 72.82 L45.64 72.64 L44.74 72.57 L43.86 72.61 L43.00 72.79 L42.14 73.10 L41.28 73.51 L40.40 73.99 L39.50 74.50 L38.57 74.98 L37.62 75.39 L36.65 75.68 L35.68 75.82 L34.72 75.79 L33.79 75.57 L32.89 75.19 L32.03 74.66 L31.21 74.01 L30.44 73.31 L29.70 72.58 L28.98 71.89 L28.25 71.27 L27.50 70.75 L26.72 70.36 L25.88 70.08 L24.99 69.92 L24.04 69.85 L23.04 69.82 L22.00 69.81 L20.95 69.76 L19.93 69.64 L18.94 69.41 L18.03 69.05 L17.22 68.54 L16.52 67.88 L15.93 67.10 L15.45 66.21 L15.07 65.25 L14.75 64.25 L14.47 63.25 L14.19 62.29 L13.87 61.39 L13.48 60.57 L13.00 59.83 L12.42 59.18 L11.72 58.59 L10.94 58.05 L10.08 57.53 L9.19 57.00 L8.31 56.44 L7.48 55.82 L6.74 55.13 L6.14 54.35 L5.69 53.51 L5.40 52.59 L5.29 51.62 L5.32 50.61 L5.47 49.58 L5.69 48.56 L5.95 47.56 L6.18 46.58 L6.36 45.64 L6.43 44.74 L6.39 43.86 L6.21 43.00 L5.90 42.14 L5.49 41.28 L5.01 40.40 L4.50 39.50 L4.02 38.57 L3.61 37.62 L3.32 36.65 L3.18 35.68 L3.21 34.72 L3.43 33.79 L3.81 32.89 L4.34 32.03 L4.99 31.21 L5.69 30.44 L6.42 29.70 L7.11 28.98 L7.73 28.25 L8.25 27.50 L8.64 26.72 L8.92 25.88 L9.08 24.99 L9.15 24.04 L9.18 23.04 L9.19 22.00 L9.24 20.95 L9.36 19.93 L9.59 18.94 L9.95 18.03 L10.46 17.22 L11.12 16.52 L11.90 15.93 L12.79 15.45 L13.75 15.07 L14.75 14.75 L15.75 14.47 L16.71 14.19 L17.61 13.87 L18.43 13.48 L19.17 13.00 L19.82 12.42 L20.41 11.72 L20.95 10.94 L21.47 10.08 L22.00 9.19 L22.56 8.31 L23.18 7.48 L23.87 6.74 L24.65 6.14 L25.49 5.69 L26.41 5.40 L27.38 5.29 L28.39 5.32 L29.42 5.47 L30.44 5.69 L31.44 5.95 L32.42 6.18 L33.36 6.36 L34.26 6.43 L35.14 6.39 L36.00 6.21 L36.86 5.90 L37.72 5.49 L38.60 5.01 L39.50 4.50 L40.43 4.02 L41.38 3.61 L42.35 3.32 L43.32 3.18 L44.28 3.21 L45.21 3.43 L46.11 3.81 L46.97 4.34 L47.79 4.99 L48.56 5.69 L49.30 6.42 L50.02 7.11 L50.75 7.73 L51.50 8.25 L52.28 8.64 L53.12 8.92 L54.01 9.08 L54.96 9.15 L55.96 9.18 L57.00 9.19 L58.05 9.24 L59.07 9.36 L60.06 9.59 L60.97 9.95 L61.78 10.46 L62.48 11.12 L63.07 11.90 L63.55 12.79 L63.93 13.75 L64.25 14.75 L64.53 15.75 L64.81 16.71 L65.13 17.61 L65.52 18.43 L66.00 19.17 L66.58 19.82 L67.28 20.41 L68.06 20.95 L68.92 21.47 L69.81 22.00 L70.69 22.56 L71.52 23.18 L72.26 23.87 L72.86 24.65 L73.31 25.49 L73.60 26.41 L73.71 27.38 L73.68 28.39 L73.53 29.42 L73.31 30.44 L73.05 31.44 L72.82 32.42 L72.64 33.36 L72.57 34.26 L72.61 35.14 L72.79 36.00 L73.10 36.86 L73.51 37.72 L73.99 38.60Z" fill="#f0e0a8"/>
<path d="M72.50 39.50 L72.98 40.38 L73.39 41.28 L73.69 42.19 L73.83 43.11 L73.80 44.02 L73.60 44.90 L73.22 45.75 L72.70 46.56 L72.07 47.32 L71.38 48.04 L70.67 48.73 L69.99 49.41 L69.39 50.08 L68.89 50.78 L68.51 51.52 L68.26 52.30 L68.12 53.15 L68.07 54.05 L68.07 55.01 L68.08 56.00 L68.06 57.00 L67.96 57.99 L67.76 58.92 L67.43 59.79 L66.95 60.56 L66.33 61.23 L65.58 61.77 L64.72 62.21 L63.80 62.56 L62.83 62.83 L61.88 63.08 L60.95 63.32 L60.09 63.61 L59.31 63.96 L58.62 64.41 L58.00 64.97 L57.46 65.63 L56.96 66.39 L56.48 67.22 L56.00 68.08 L55.48 68.94 L54.91 69.74 L54.26 70.45 L53.54 71.04 L52.74 71.47 L51.87 71.73 L50.95 71.83 L49.99 71.78 L49.01 71.62 L48.04 71.38 L47.09 71.11 L46.17 70.86 L45.28 70.67 L44.42 70.59 L43.60 70.63 L42.79 70.81 L41.99 71.11 L41.18 71.52 L40.35 71.99 L39.50 72.50 L38.62 72.98 L37.72 73.39 L36.81 73.69 L35.89 73.83 L34.98 73.80 L34.10 73.60 L33.25 73.22 L32.44 72.70 L31.68 72.07 L30.96 71.38 L30.27 70.67 L29.59 69.99 L28.92 69.39 L28.22 68.89 L27.48 68.51 L26.70 68.26 L25.85 68.12 L24.95 68.07 L23.99 68.07 L23.00 68.08 L22.00 68.06 L21.01 67.96 L20.08 67.76 L19.21 67.43 L18.44 66.95 L17.77 66.33 L17.23 65.58 L16.79 64.72 L16.44 63.80 L16.17 62.83 L15.92 61.88 L15.68 60.95 L15.39 60.09 L15.04 59.31 L14.59 58.62 L14.03 58.00 L13.37 57.46 L12.61 56.96 L11.78 56.48 L10.92 56.00 L10.06 55.48 L9.26 54.91 L8.55 54.26 L7.96 53.54 L7.53 52.74 L7.27 51.87 L7.17 50.95 L7.22 49.99 L7.38 49.01 L7.62 48.04 L7.89 47.09 L8.14 46.17 L8.33 45.28 L8.41 44.42 L8.37 43.60 L8.19 42.79 L7.89 41.99 L7.48 41.18 L7.01 40.35 L6.50 39.50 L6.02 38.62 L5.61 37.72 L5.31 36.81 L5.17 35.89 L5.20 34.98 L5.40 34.10 L5.78 33.25 L6.30 32.44 L6.93 31.68 L7.62 30.96 L8.33 30.27 L9.01 29.59 L9.61 28.92 L10.11 28.22 L10.49 27.48 L10.74 26.70 L10.88 25.85 L10.93 24.95 L10.93 23.99 L10.92 23.00 L10.94 22.00 L11.04 21.01 L11.24 20.08 L11.57 19.21 L12.05 18.44 L12.67 17.77 L13.42 17.23 L14.28 16.79 L15.20 16.44 L16.17 16.17 L17.12 15.92 L18.05 15.68 L18.91 15.39 L19.69 15.04 L20.38 14.59 L21.00 14.03 L21.54 13.37 L22.04 12.61 L22.52 11.78 L23.00 10.92 L23.52 10.06 L24.09 9.26 L24.74 8.55 L25.46 7.96 L26.26 7.53 L27.13 7.27 L28.05 7.17 L29.01 7.22 L29.99 7.38 L30.96 7.62 L31.91 7.89 L32.83 8.14 L33.72 8.33 L34.58 8.41 L35.40 8.37 L36.21 8.19 L37.01 7.89 L37.82 7.48 L38.65 7.01 L39.50 6.50 L40.38 6.02 L41.28 5.61 L42.19 5.31 L43.11 5.17 L44.02 5.20 L44.90 5.40 L45.75 5.78 L46.56 6.30 L47.32 6.93 L48.04 7.62 L48.73 8.33 L49.41 9.01 L50.08 9.61 L50.78 10.11 L51.52 10.49 L52.30 10.74 L53.15 10.88 L54.05 10.93 L55.01 10.93 L56.00 10.92 L57.00 10.94 L57.99 11.04 L58.92 11.24 L59.79 11.57 L60.56 12.05 L61.23 12.67 L61.77 13.42 L62.21 14.28 L62.56 15.20 L62.83 16.17 L63.08 17.12 L63.32 18.05 L63.61 18.91 L63.96 19.69 L64.41 20.38 L64.97 21.00 L65.63 21.54 L66.39 22.04 L67.22 22.52 L68.08 23.00 L68.94 23.52 L69.74 24.09 L70.45 24.74 L71.04 25.46 L71.47 26.26 L71.73 27.13 L71.83 28.05 L71.78 29.01 L71.62 29.99 L71.38 30.96 L71.11 31.91 L70.86 32.83 L70.67 33.72 L70.59 34.58 L70.63 35.40 L70.81 36.21 L71.11 37.01 L71.52 37.82 L71.99 38.65Z" fill="url(#nv)"/>
<g fill="none" stroke="#e9dca6" stroke-width="2.2">
<rect x="30" y="17" width="19" height="15"/>
<path d="M33 21 H46 M33 25 H46 M39.5 21 V29 M34 29 H45"/>
<path d="M30 20 C24 18,20 22,24 26 C27 28,29 25,27 23"/>
<path d="M49 20 C55 18,59 22,55 26 C52 28,50 25,52 23"/>
<path d="M26 27 C26 34,30 38,34 38 H45 C49 38,53 34,53 27"/>
<path d="M33 38 V46 M46 38 V46 M28 46 H51"/>
</g>
<rect x="33" y="33" width="13" height="3" fill="#e9dca6"/>
<text x="15" y="58" font-size="13" font-weight="bold" fill="#e9dca6" font-family="Liberation Sans, sans-serif">金鼎</text>
<path d="M26 63 H53" stroke="#b8a878" stroke-width="0.8"/>
</svg>

<svg class="a" style="left:1348px;top:249px" width="78" height="78" viewBox="0 0 78 78">
<path d="M39 1 L43 5 L48 2 L51 7 L57 6 L58 11 L64 12 L64 17 L69 20 L67 25 L72 29 L69 34 L73 38 L69 42 L72 47 L67 51 L69 56 L64 59 L64 64 L58 65 L57 70 L51 69 L48 74 L43 71 L39 75 L35 71 L30 74 L27 69 L21 70 L20 65 L14 64 L14 59 L9 56 L11 51 L6 47 L9 42 L5 38 L9 34 L6 29 L11 25 L9 20 L14 17 L14 12 L20 11 L21 6 L27 7 L30 2 L35 5Z" fill="#0a0a0a"/>
<circle cx="39" cy="38" r="31" fill="#1d1915" stroke="#e6d9bc" stroke-width="3"/>
<circle cx="39" cy="38" r="27" fill="none" stroke="#5a4a38" stroke-width="0.6"/>
<text x="23" y="34" font-size="14" font-weight="bold" fill="#d8aa58" font-family="Liberation Sans, sans-serif">嗨付</text>
<path d="M2 38 H76 V54 H2 L6 46Z" fill="#050505"/>
<path d="M8 38.5 H70 M8 53.5 H70" stroke="#8a7a60" stroke-width="0.6"/>
<text x="20" y="51" font-size="15" font-weight="bold" fill="#f4f4f4" font-family="Liberation Sans, sans-serif">跑分</text>
<text x="39" y="64" font-size="7" fill="#e0e0e0" text-anchor="middle" font-family="Liberation Sans, sans-serif">★★★★</text>
</svg>

<svg class="a" style="left:1348px;top:341px" width="80" height="84" viewBox="0 0 80 84">
<defs><linearGradient id="gl4" x1="0" y1="0" x2="1" y2="1"><stop offset="0" stop-color="#f0d890"/><stop offset="0.5" stop-color="#7a5a28"/><stop offset="1" stop-color="#d8b870"/></linearGradient></defs>
<circle cx="39" cy="41.5" r="38.5" fill="url(#gl4)"/>
<circle cx="39" cy="41.5" r="35.5" fill="#222224"/>
<path transform="translate(-4,-2)" d="M26 30 C28 26,32 25,35 27 C40 24,46 22,52 26 L62 27 L52 31 C48 33,44 34,40 36 L36 42 L33 38 C30 36,27 34,26 30Z" fill="#f2c81a"/>
<path d="M36 44 L40 52 L37 54Z" fill="#f2c81a"/>
<text x="15" y="67" font-size="13" font-weight="bold" fill="#f2c81a" font-family="Liberation Sans, sans-serif">K</text>
<text x="25.5" y="67" font-size="13" font-weight="bold" fill="#e8e8e8" font-family="Liberation Sans, sans-serif">G</text>
</svg>

<svg class="a" style="left:1350px;top:434px" width="80" height="80" viewBox="0 0 80 80">
<defs><linearGradient id="gl5" x1="0" y1="0" x2="1" y2="1"><stop offset="0" stop-color="#ecd2bc"/><stop offset="0.5" stop-color="#9a7a68"/><stop offset="1" stop-color="#e6c8b0"/></linearGradient></defs>
<circle cx="39" cy="39" r="38" fill="url(#gl5)"/>
<circle cx="39" cy="39" r="34.5" fill="#1b1b1b"/>
<path d="M24 36 Q34 50 52 42" stroke="#e8d6c4" stroke-width="4.5" fill="none"/>
<path d="M37 22 V36" stroke="#e8d6c4" stroke-width="3.5"/>
<text x="35" y="60" font-size="10" font-weight="bold" fill="#d8c0b0" text-anchor="middle" font-family="Liberation Sans, sans-serif">奇</text>
<text x="35" y="69" font-size="6" fill="#b8a090" text-anchor="middle" font-family="Liberation Sans, sans-serif">计划</text>
</svg>

<!-- nicai -->
<div class="a" style="left:1384px;top:204px;width:48px;height:49px;border-radius:6px 0 0 6px;background:linear-gradient(180deg,#62baf6,#4e9aea);overflow:hidden">
<div class="t" style="position:absolute;left:3px;top:11px;font-size:17px;font-weight:bold;color:#fff;letter-spacing:-0.5px">nicai</div>
<div style="position:absolute;left:10px;top:8px;width:9px;height:5px;border-radius:50%;background:#e84a7a;transform:rotate(-30deg)"></div>
<div style="position:absolute;left:0;top:34px;width:48px;height:15px;background:#4a8ee6"></div>
<div class="t" style="position:absolute;left:0px;top:35px;font-size:12px;color:#fff;letter-spacing:-0.5px">奖源认证</div>
</div>
<div class="a" style="left:1384px;top:260px;width:56px;height:50px;border-radius:8px;background:#fff;box-shadow:-1px 2px 5px rgba(80,110,150,0.18)"></div>
<svg class="a" style="left:1399px;top:267px" width="20" height="20" viewBox="0 0 20 20"><path d="M3 12 V9 A7 7 0 0 1 17 9 V12" stroke="#5a9ce6" stroke-width="1.8" fill="none"/><rect x="1.5" y="10" width="4.5" height="7" rx="2" fill="#5a9ce6"/><rect x="14" y="10" width="4.5" height="7" rx="2" fill="#5a9ce6"/></svg>
<div class="a t" style="left:1397px;top:289px;font-size:12px;color:#444">客服</div>
<div class="a" style="left:1384px;top:316px;width:56px;height:50px;border-radius:8px;background:#fff;box-shadow:-1px 2px 5px rgba(80,110,150,0.18)"></div>
<svg class="a" style="left:1399px;top:323px" width="20" height="20" viewBox="0 0 20 20"><path d="M5 2 H15 L19 7 L10 18 L1 7Z M1 7 H19 M7 2 L5 7 L10 18 L15 7 L13 2" stroke="#5a9ce6" stroke-width="1.5" fill="none" stroke-linejoin="round"/></svg>
<div class="a t" style="left:1397px;top:345px;font-size:12px;color:#444">挂机</div>
<div class="a" style="left:1384px;top:372px;width:56px;height:50px;border-radius:8px;background:#fff;box-shadow:-1px 2px 5px rgba(80,110,150,0.18)"></div>
<svg class="a" style="left:1399px;top:379px" width="20" height="20" viewBox="0 0 20 20"><circle cx="10" cy="6" r="4.2" stroke="#5a9ce6" stroke-width="1.8" fill="none"/><path d="M2 18 Q2 11.5 10 11.5 Q18 11.5 18 18Z" stroke="#5a9ce6" stroke-width="1.8" fill="none" stroke-linejoin="round"/></svg>
<div class="a t" style="left:1397px;top:401px;font-size:12px;color:#444">我的</div>
<div class="a" style="left:1384px;top:428px;width:56px;height:50px;border-radius:8px;background:#fff;box-shadow:-1px 2px 5px rgba(80,110,150,0.18)"></div>
<svg class="a" style="left:1399px;top:435px" width="20" height="20" viewBox="0 0 20 20"><path d="M10 2 C15 2 18.5 5 18.5 9 C18.5 13 15 16 10 16 C9 16 8 15.8 7 15.5 L3 18 L3.8 14 C2.2 12.8 1.5 11 1.5 9 C1.5 5 5 2 10 2Z" stroke="#5a9ce6" stroke-width="1.6" fill="none"/><circle cx="6.5" cy="9" r="1.1" fill="#5a9ce6"/><circle cx="10" cy="9" r="1.1" fill="#5a9ce6"/><circle cx="13.5" cy="9" r="1.1" fill="#5a9ce6"/></svg>
<div class="a t" style="left:1397px;top:457px;font-size:12px;color:#444">聊天</div>
<div class="a" style="left:1384px;top:484px;width:56px;height:50px;border-radius:8px;background:#fff;box-shadow:-1px 2px 5px rgba(80,110,150,0.18)"></div>
<svg class="a" style="left:1399px;top:491px" width="20" height="20" viewBox="0 0 20 20"><circle cx="10" cy="10" r="8.5" fill="#5a9ce6"/><rect x="8.8" y="4.5" width="2.4" height="7" rx="1" fill="#fff"/><circle cx="10" cy="14.5" r="1.3" fill="#fff"/></svg>
<div class="a t" style="left:1397px;top:513px;font-size:12px;color:#444">帮助</div>
<div class="a" style="left:1384px;top:540px;width:56px;height:50px;border-radius:8px;background:#fff;box-shadow:-1px 2px 5px rgba(80,110,150,0.18)"></div>
<svg class="a" style="left:1399px;top:547px" width="20" height="20" viewBox="0 0 20 20"><path d="M2 7 H6 L11 3 V17 L6 13 H2Z" fill="#5a9ce6"/><path d="M13.5 8 L18 12.5 M18 8 L13.5 12.5" stroke="#5a9ce6" stroke-width="2"/></svg>
<div class="a t" style="left:1397px;top:569px;font-size:12px;color:#444">声音</div>
<div class="a" style="left:1384px;top:596px;width:56px;height:50px;border-radius:8px;background:#fff;box-shadow:-1px 2px 5px rgba(80,110,150,0.18)"></div>
<svg class="a" style="left:1399px;top:603px" width="20" height="20" viewBox="0 0 20 20"><circle cx="10" cy="10" r="8.3" stroke="#5a9ce6" stroke-width="1.6" fill="none"/><path d="M10 15 V6.5 M6.5 10 L10 6 L13.5 10" stroke="#5a9ce6" stroke-width="1.8" fill="none"/></svg>
<div class="a t" style="left:1397px;top:625px;font-size:12px;color:#444">顶部</div>

</body></html>
